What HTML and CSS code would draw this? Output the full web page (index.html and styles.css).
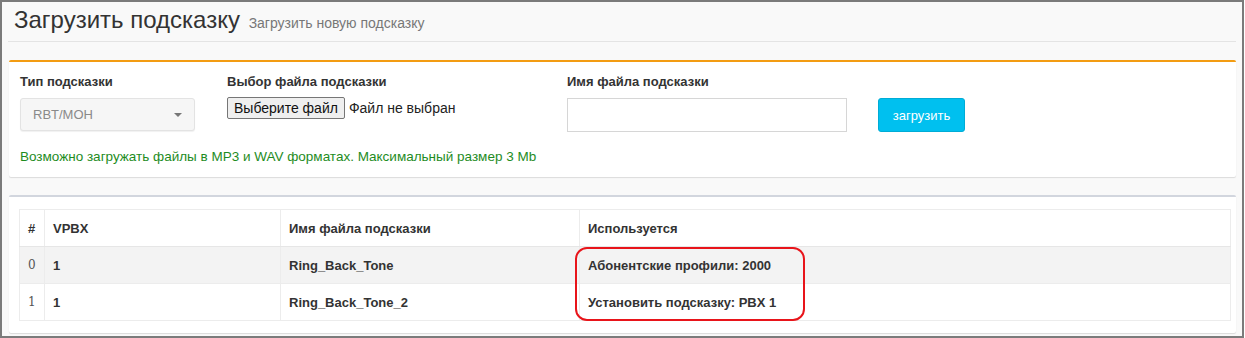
FILE: index.html
```html
<!DOCTYPE html>
<html lang="ru">
<head>
    <meta charset="UTF-8">
    <title>Загрузить подсказку</title>
    <link rel="stylesheet" href="styles.css">
</head>
<body>
    <div class="frame">
        <section class="content-header">
            <h1>Загрузить подсказку <small>Загрузить новую подсказку</small></h1>
        </section>

        <section class="content">
            <!-- upload form -->
            <div class="box box-warning">
                <div class="box-body">
                    <div class="upload-grid">
                        <div class="form-group">
                            <label>Тип подсказки</label>
                            <div class="select-fake">
                                <span>RBT/MOH</span>
                                <span class="caret"></span>
                            </div>
                        </div>
                        <div class="form-group">
                            <label>Выбор файла подсказки</label>
                            <div class="file-fake">
                                <span class="file-btn">Выберите файл</span>
                                <span class="file-name">Файл не выбран</span>
                            </div>
                        </div>
                        <div class="form-group">
                            <label for="fileName">Имя файла подсказки</label>
                            <input type="text" id="fileName" class="form-control">
                        </div>
                        <div class="form-group btn-cell">
                            <button class="btn-info">загрузить</button>
                        </div>
                    </div>
                    <p class="help-green">Возможно загружать файлы в MP3 и WAV форматах. Максимальный размер 3 Mb</p>
                </div>
            </div>

            <!-- prompts list -->
            <div class="box box-default">
                <div class="box-body table-wrap">
                    <table class="table">
                        <thead>
                            <tr>
                                <th class="col-num">#</th>
                                <th class="col-vpbx">VPBX</th>
                                <th class="col-name">Имя файла подсказки</th>
                                <th>Используется</th>
                            </tr>
                        </thead>
                        <tbody>
                            <tr class="odd">
                                <td class="num">0</td>
                                <td>1</td>
                                <td>Ring_Back_Tone</td>
                                <td>Абонентские профили: 2000</td>
                            </tr>
                            <tr>
                                <td class="num">1</td>
                                <td>1</td>
                                <td>Ring_Back_Tone_2</td>
                                <td>Установить подсказку: PBX 1</td>
                            </tr>
                        </tbody>
                    </table>
                    <div class="highlight"></div>
                </div>
            </div>
        </section>
    </div>
</body>
</html>
```

FILE: styles.css
```css
html, body {
    margin: 0;
    padding: 0;
    background-color: #ffffff;
}
body {
    font-family: "Liberation Sans", Arial, sans-serif;
    color: #333;
}
.frame {
    box-sizing: border-box;
    width: 1244px;
    height: 338px;
    border: 2px solid #7b7b7b;
    background-color: #f9f9f9;
    overflow: hidden;
}

/* Header */
.content-header {
    margin: 0 6px;
    height: 40px;
    border-bottom: 1px solid #e4e4e4;
    box-sizing: border-box;
}
.content-header h1 {
    margin: 0;
    padding: 3px 0 0 6px;
    font-size: 24px;
    font-weight: normal;
    line-height: 30px;
    color: #333;
}
.content-header h1 small {
    font-size: 14px;
    color: #777;
    padding-left: 2px;
}

/* Boxes */
.content {
    padding: 18px 6px 0 7px;
}
.box {
    position: relative;
    background-color: #fff;
    border-top: 2px solid #d2d6de;
    border-radius: 2px;
    box-shadow: 0 1px 1px rgba(0, 0, 0, 0.12);
    margin-bottom: 18px;
}
.box-warning {
    border-top-color: #f39c12;
}
.box-body {
    padding: 10px 11px 10px 11px;
}

/* Upload form */
.upload-grid {
    display: grid;
    grid-template-columns: 207px 340px 311px auto;
    align-items: start;
}
.form-group label {
    display: block;
    font-size: 13px;
    font-weight: bold;
    line-height: 20px;
    margin-bottom: 6px;
}
.select-fake {
    box-sizing: border-box;
    width: 175px;
    height: 33px;
    display: flex;
    align-items: center;
    justify-content: space-between;
    padding: 0 12px 0 12px;
    background-color: #f6f6f6;
    border: 1px solid #e3e3e3;
    border-radius: 3px;
    box-shadow: 0 1px 1px rgba(0, 0, 0, 0.06);
    font-size: 13px;
    color: #8a8a8a;
}
.caret {
    width: 0;
    height: 0;
    border-left: 4px solid transparent;
    border-right: 4px solid transparent;
    border-top: 4px solid #777;
}
.file-fake {
    display: flex;
    align-items: center;
    margin-top: -1px;
}
.file-btn {
    box-sizing: border-box;
    height: 22px;
    line-height: 20px;
    padding: 0 6px;
    background-color: #efefef;
    border: 1px solid #767676;
    border-radius: 2px;
    font-size: 14px;
    color: #111;
}
.file-name {
    margin-left: 4px;
    font-size: 14px;
    color: #222;
}
.form-control {
    box-sizing: border-box;
    width: 280px;
    height: 34px;
    border: 1px solid #d6d6d6;
    padding: 6px 12px;
    font-size: 14px;
}
.btn-cell {
    padding-top: 26px;
}
.btn-info {
    box-sizing: border-box;
    width: 87px;
    height: 34px;
    background-color: #00c0ef;
    border: 1px solid #00acd6;
    border-radius: 3px;
    color: #fff;
    font-family: "Liberation Sans", Arial, sans-serif;
    font-size: 13px;
}
.help-green {
    margin: 15px 0 0 0;
    font-size: 13.5px;
    line-height: 20px;
    color: #1e8c1e;
}

/* Table */
.table-wrap {
    position: relative;
    padding: 12px 5px 12px 10px;
}
.table {
    width: 100%;
    border-collapse: collapse;
    border: 1px solid #ececec;
    font-size: 13px;
}
.table th,
.table td {
    height: 36px;
    padding: 0 8px;
    text-align: left;
    font-weight: bold;
    border: 1px solid #ececec;
    color: #333;
}
.table thead th {
    border-bottom: 1px solid #e6e6e6;
}
.col-num {
    width: 8px;
}
.col-vpbx {
    width: 219px;
}
.col-name {
    width: 282px;
}
.table td.num {
    font-family: "DejaVu Serif", "Liberation Serif", serif;
    font-weight: normal;
    font-size: 12px;
    color: #555;
}
.table tr.odd td {
    background-color: #f3f3f3;
}
.highlight {
    position: absolute;
    left: 566px;
    top: 50px;
    width: 226px;
    height: 70px;
    border: 2px solid #e8141a;
    border-radius: 12px;
}
```
